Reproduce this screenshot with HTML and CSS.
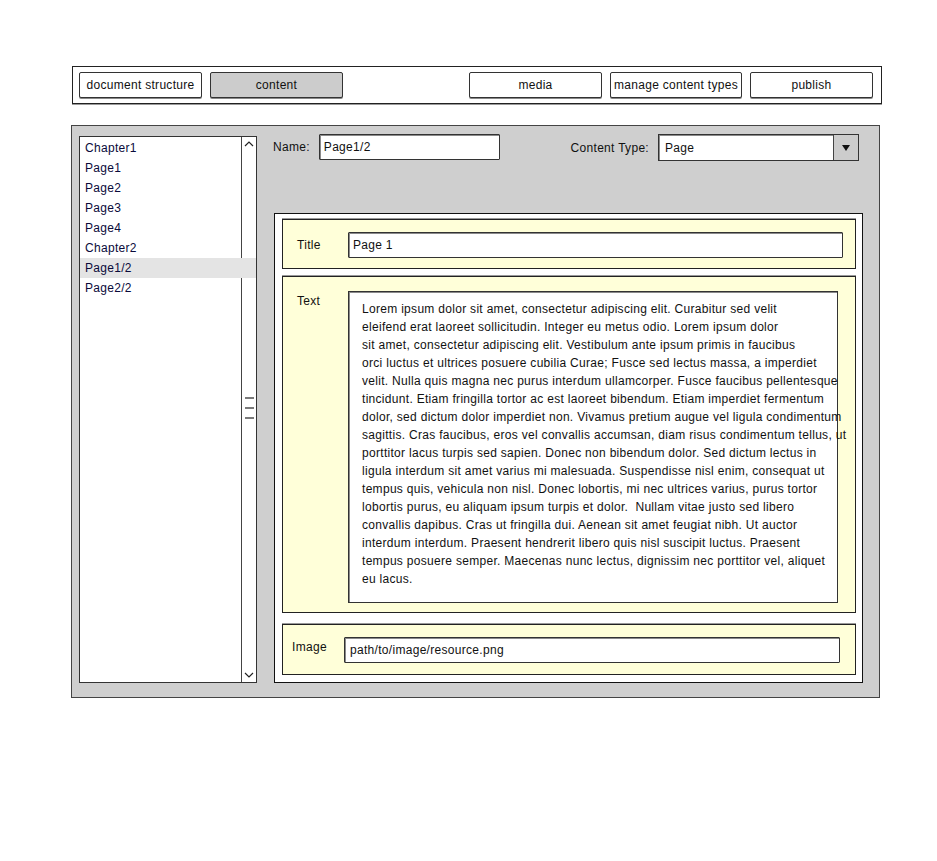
FILE: index.html
```html
<!DOCTYPE html>
<html>
<head>
<meta charset="utf-8">
<title>Content editor</title>
<link rel="stylesheet" href="styles.css">
</head>
<body>
<div class="page">
  <div class="toolbar">
    <div class="btn w122">document structure</div>
    <div class="btn w132 active">content</div>
    <div class="btn w132 push">media</div>
    <div class="btn w131">manage content types</div>
    <div class="btn w122">publish</div>
  </div>

  <div class="main">
    <div class="tree">
      <ul class="items">
        <li>Chapter1</li>
        <li>Page1</li>
        <li>Page2</li>
        <li>Page3</li>
        <li>Page4</li>
        <li>Chapter2</li>
        <li class="selected">Page1/2</li>
        <li>Page2/2</li>
      </ul>
      <div class="scrollbar">
        <svg class="arrow" width="14" height="10" viewBox="0 0 14 10"><polyline points="3,7 7,3 11,7" fill="none" stroke="#222" stroke-width="1.2"/></svg>
        <div class="grip"><span></span><span></span><span></span></div>
        <svg class="arrow" width="14" height="10" viewBox="0 0 14 10"><polyline points="3,3 7,7 11,3" fill="none" stroke="#222" stroke-width="1.2"/></svg>
      </div>
    </div>

    <div class="editor">
      <div class="meta">
        <div class="group">
          <span class="lbl">Name:</span>
          <div class="input name">Page1/2</div>
        </div>
        <div class="group">
          <span class="lbl ctype">Content Type:</span>
          <div class="select">
            <span class="value">Page</span>
            <div class="drop"><svg width="10" height="8" viewBox="0 0 10 8"><polygon points="1,1 9,1 5,7" fill="#111"/></svg></div>
          </div>
        </div>
      </div>

      <div class="fields">
        <div class="field title-field">
          <span class="flabel">Title</span>
          <div class="input grow">Page 1</div>
        </div>
        <div class="field text-field">
          <span class="flabel">Text</span>
          <div class="textarea">Lorem ipsum dolor sit amet, consectetur adipiscing elit. Curabitur sed velit<br>eleifend erat laoreet sollicitudin. Integer eu metus odio. Lorem ipsum dolor<br>sit amet, consectetur adipiscing elit. Vestibulum ante ipsum primis in faucibus<br>orci luctus et ultrices posuere cubilia Curae; Fusce sed lectus massa, a imperdiet<br>velit. Nulla quis magna nec purus interdum ullamcorper. Fusce faucibus pellentesque<br>tincidunt. Etiam fringilla tortor ac est laoreet bibendum. Etiam imperdiet fermentum<br>dolor, sed dictum dolor imperdiet non. Vivamus pretium augue vel ligula condimentum<br>sagittis. Cras faucibus, eros vel convallis accumsan, diam risus condimentum tellus, ut<br>porttitor lacus turpis sed sapien. Donec non bibendum dolor. Sed dictum lectus in<br>ligula interdum sit amet varius mi malesuada. Suspendisse nisl enim, consequat ut<br>tempus quis, vehicula non nisl. Donec lobortis, mi nec ultrices varius, purus tortor<br>lobortis purus, eu aliquam ipsum turpis et dolor.&nbsp; Nullam vitae justo sed libero<br>convallis dapibus. Cras ut fringilla dui. Aenean sit amet feugiat nibh. Ut auctor<br>interdum interdum. Praesent hendrerit libero quis nisl suscipit luctus. Praesent<br>tempus posuere semper. Maecenas nunc lectus, dignissim nec porttitor vel, aliquet<br>eu lacus.</div>
        </div>
        <div class="field image-field">
          <span class="flabel ilabel">Image</span>
          <div class="input grow ipath">path/to/image/resource.png</div>
        </div>
      </div>
    </div>
  </div>
</div>
</body>
</html>
```

FILE: styles.css
```css
* { box-sizing: border-box; }

html, body {
  margin: 0;
  padding: 0;
  background: #ffffff;
}

body {
  font-family: "Comic Sans MS", "Liberation Sans", Arial, sans-serif;
  font-size: 12px;
  letter-spacing: 0.3px;
  color: #111;
}

.page {
  padding: 66px 0 0 72px;
}

/* ---------- toolbar ---------- */
.toolbar {
  width: 810px;
  height: 38px;
  border: 1px solid #222;
  box-shadow: 0 1px 0 #9a9a9a;
  background: #fff;
  display: flex;
  align-items: flex-start;
  gap: 8px;
  padding: 5px 8px 0 6px;
}

.btn {
  height: 26px;
  border: 1px solid #333;
  border-radius: 2px;
  box-shadow: 0 1px 0 #888;
  background: #fff;
  display: flex;
  align-items: center;
  justify-content: center;
  white-space: nowrap;
}
.btn.active { background: #cccccc; }
.btn.push { margin-left: auto; }
.w122 { width: 123px; }
.w131 { width: 132px; }
.w132 { width: 133px; }

/* ---------- main panel ---------- */
.main {
  margin: 21px 0 0 -1px;
  width: 809px;
  height: 573px;
  border: 1px solid #444;
  box-shadow: 0 1px 0 #999;
  background: #cfcfcf;
  display: flex;
  align-items: stretch;
  padding: 10px 16px 14px 7px;
  gap: 17px;
}

.tree {
  width: 178px;
  flex: none;
  border: 1px solid #333;
  background: #fff;
  display: flex;
}

.items {
  list-style: none;
  margin: 0;
  padding: 1px 0 0 0;
  flex: 1;
}
.items li {
  height: 20px;
  line-height: 20px;
  padding-left: 5px;
  color: #0a0a3a;
  margin-right: -15px;
  position: relative;
}
.items li.selected { background: #e4e4e4; }

.scrollbar {
  width: 15px;
  flex: none;
  border-left: 1px solid #444;
  display: flex;
  flex-direction: column;
  align-items: center;
  justify-content: space-between;
  padding: 2px 0 2px 0;
}
.arrow { display: block; }
.grip {
  display: flex;
  flex-direction: column;
  gap: 8px;
  margin-top: -4px;
}
.grip span {
  display: block;
  width: 9px;
  height: 2px;
  background: #7a7a7a;
}

/* ---------- editor ---------- */
.editor {
  flex: 1;
  min-width: 0;
  display: flex;
  flex-direction: column;
  margin-top: -2px;
}

.meta {
  display: flex;
  justify-content: space-between;
  align-items: flex-start;
  height: 27px;
  padding-right: 4px;
  margin-left: -1px;
}
.group {
  display: flex;
  align-items: center;
}
.lbl {
  white-space: nowrap;
  margin-right: 9px;
}
.ctype { margin-right: 9px; }

.input {
  height: 26px;
  border: 1px solid #333;
  border-radius: 1px;
  background: #fff;
  box-shadow: inset 1px 1px 0 #8a8a8a;
  display: flex;
  align-items: center;
  padding-left: 4px;
  white-space: nowrap;
  min-width: 0;
}
.input.name { width: 181px; }
.input.grow { flex: 1; }
.input.ipath { padding-left: 5px; }

.select {
  width: 201px;
  height: 27px;
  border: 1px solid #333;
  background: #fff;
  box-shadow: inset 1px 1px 0 #8a8a8a;
  display: flex;
  align-items: stretch;
}
.select .value {
  flex: 1;
  display: flex;
  align-items: center;
  padding-left: 6px;
}
.drop {
  width: 25px;
  background: #cccccc;
  border-left: 1px solid #444;
  display: flex;
  align-items: center;
  justify-content: center;
}
.drop svg { display: block; }

/* ---------- field container ---------- */
.fields {
  flex: 1;
  min-width: 0;
  margin-top: 52px;
  border: 1px solid #111;
  background: #fff;
  display: flex;
  flex-direction: column;
  padding: 5px 6px 7px 7px;
}

.field {
  border: 1px solid #222;
  background: #ffffd9;
  box-shadow: 0 -1px 0 #999;
  display: flex;
  min-width: 0;
}
.flabel {
  flex: none;
  white-space: nowrap;
}

.title-field {
  height: 50px;
  align-items: center;
  padding: 1px 12px 0 14px;
}
.title-field .flabel { width: 51px; }

.text-field {
  flex: 1;
  margin-top: 7px;
  align-items: flex-start;
  padding: 14px 17px 9px 14px;
}
.text-field .flabel {
  width: 51px;
  line-height: 16px;
  padding-top: 2px;
}
.textarea {
  flex: 1;
  min-width: 0;
  align-self: stretch;
  border: 1px solid #333;
  background: #fff;
  box-shadow: inset 1px 1px 0 #8a8a8a;
  padding: 8px 0 0 13px;
  line-height: 18px;
  white-space: nowrap;
  overflow: visible;
}

.image-field {
  height: 51px;
  margin-top: 11px;
  align-items: center;
  padding: 0 15px 0 9px;
}
.image-field .flabel {
  width: 52px;
  margin-top: -6px;
}
```
